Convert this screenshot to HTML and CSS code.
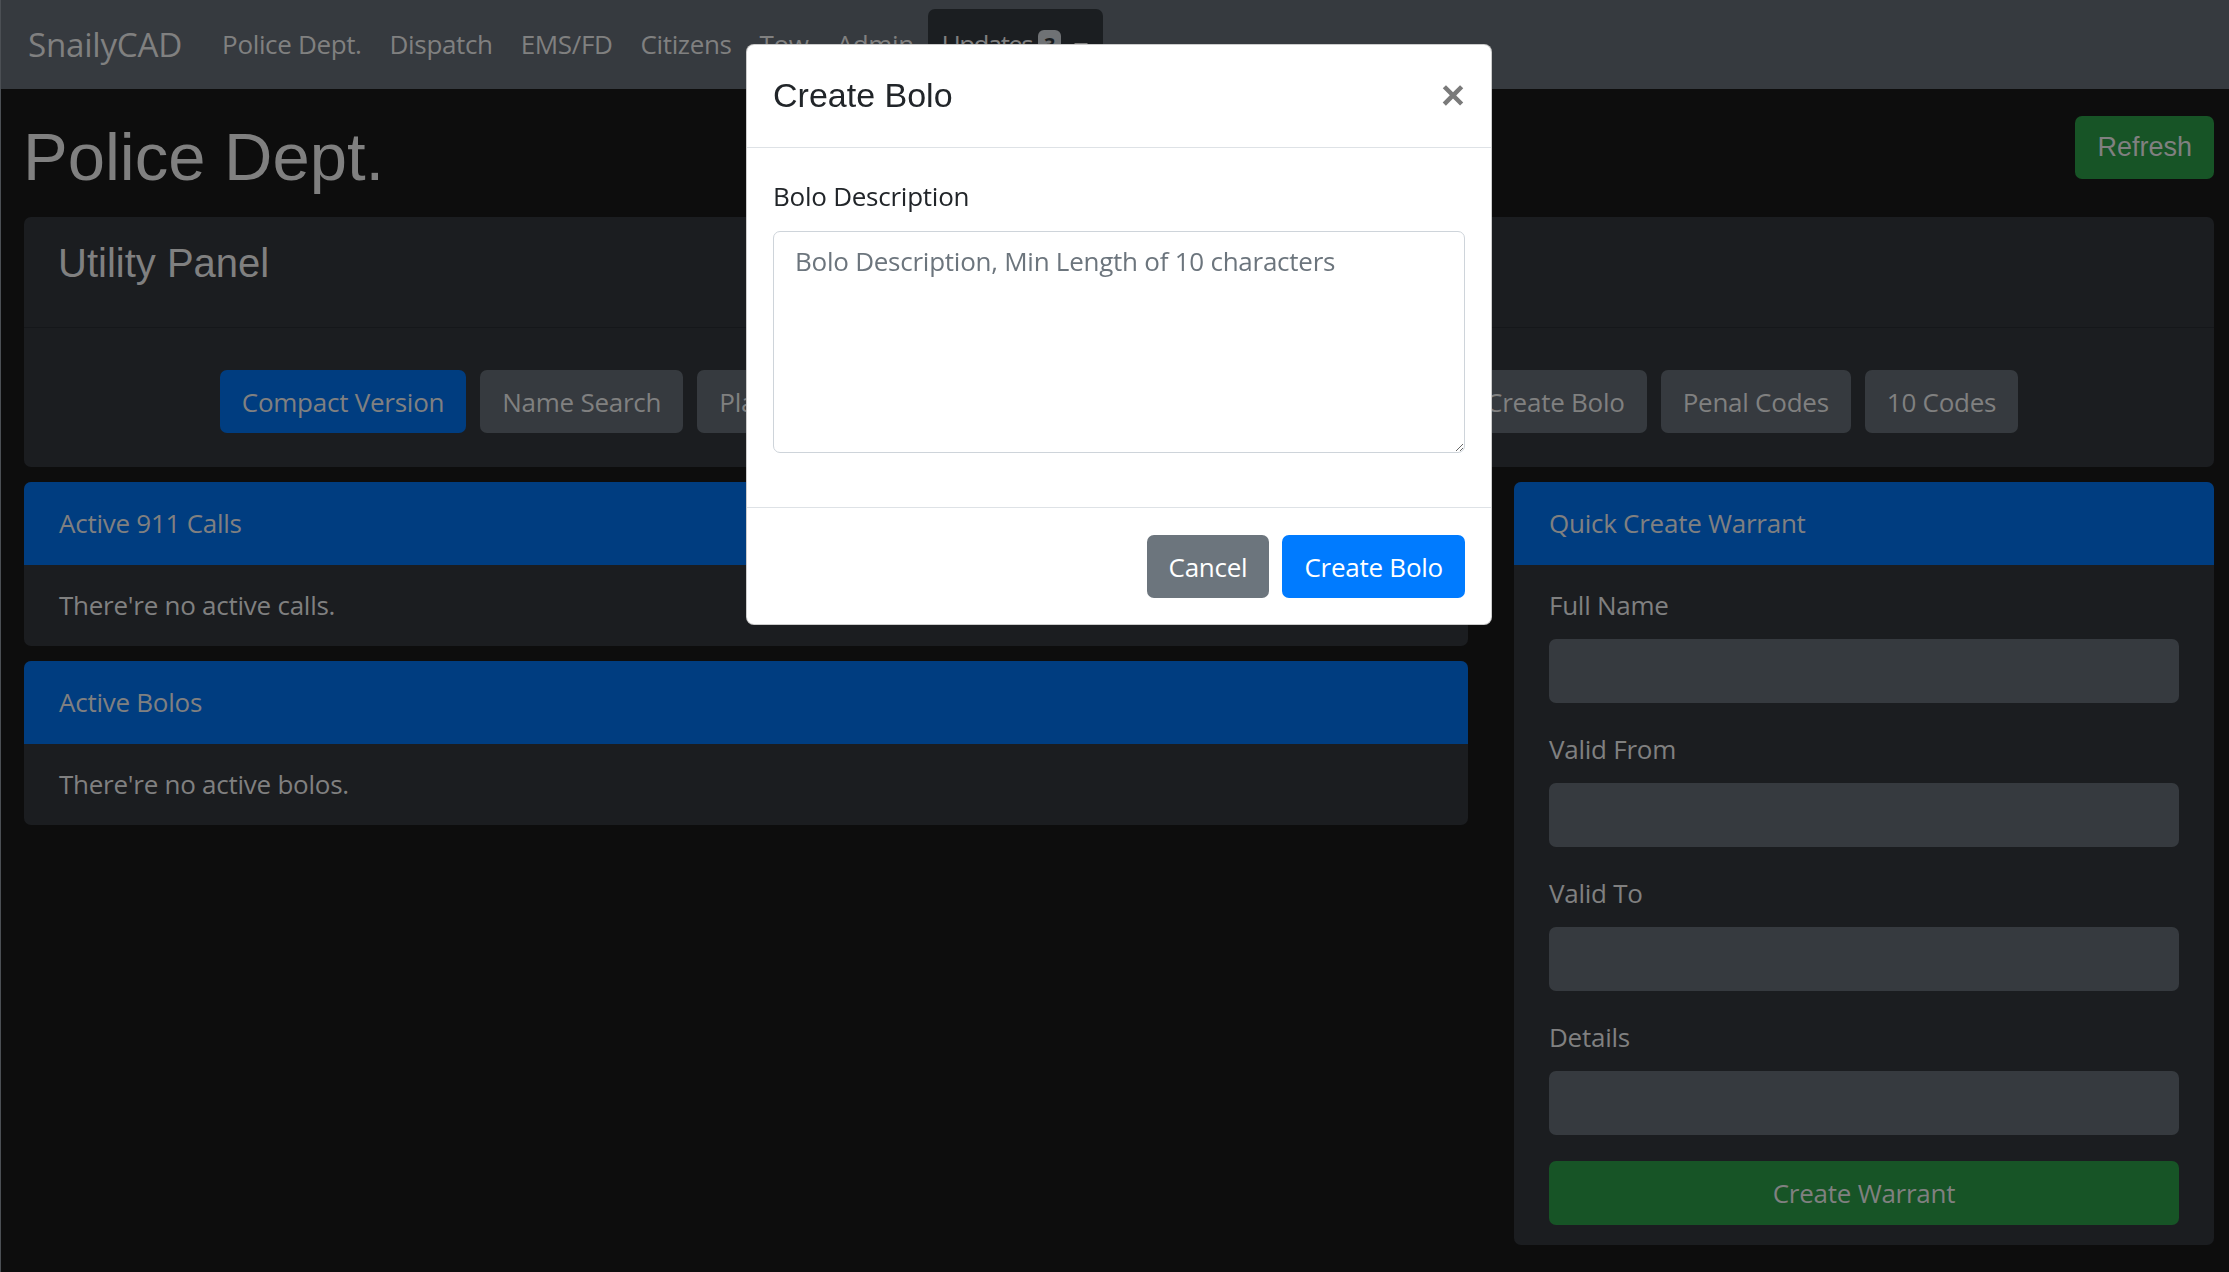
FILE: index.html
```html
<!DOCTYPE html>
<html lang="en">
<head>
<meta charset="utf-8">
<title>SnailyCAD - Police Dept.</title>
<link rel="stylesheet" href="styles.css">
</head>
<body>
<nav class="navbar">
  <span class="brand">SnailyCAD</span>
  <a class="nav-link">Police Dept.</a>
  <a class="nav-link">Dispatch</a>
  <a class="nav-link">EMS/FD</a>
  <a class="nav-link">Citizens</a>
  <a class="nav-link">Tow</a>
  <a class="nav-link">Admin</a>
  <a class="nav-link nav-open"><span class="updates-text">Updates</span><span class="badge">3</span><span class="caret"></span></a>
</nav>

<main class="container">
  <div class="page-head">
    <h1 class="page-title">Police Dept.</h1>
    <button class="btn btn-green btn-refresh">Refresh</button>
  </div>

  <section class="card utility">
    <div class="utility-header"><h4 class="utility-title">Utility Panel</h4></div>
    <div class="utility-body">
      <button class="btn btn-blue">Compact Version</button>
      <button class="btn btn-dark">Name Search</button>
      <button class="btn btn-dark">Plate Search</button>
      <button class="btn btn-dark">Weapon Search</button>
      <button class="btn btn-dark btn-narrow">Create Written Warning</button>
      <button class="btn btn-dark">Create Bolo</button>
      <button class="btn btn-dark">Penal Codes</button>
      <button class="btn btn-dark">10 Codes</button>
    </div>
  </section>

  <div class="columns">
    <div class="col-left">
      <section class="card">
        <div class="card-header">Active 911 Calls</div>
        <div class="card-body">There're no active calls.</div>
      </section>
      <section class="card">
        <div class="card-header">Active Bolos</div>
        <div class="card-body">There're no active bolos.</div>
      </section>
    </div>
    <div class="col-right">
      <section class="card">
        <div class="card-header">Quick Create Warrant</div>
        <div class="card-body">
          <div class="form-group">
            <label class="field-label">Full Name</label>
            <input class="field-input" type="text">
          </div>
          <div class="form-group">
            <label class="field-label">Valid From</label>
            <input class="field-input" type="text">
          </div>
          <div class="form-group">
            <label class="field-label">Valid To</label>
            <input class="field-input" type="text">
          </div>
          <div class="form-group">
            <label class="field-label">Details</label>
            <input class="field-input" type="text">
          </div>
          <button class="btn btn-green btn-block">Create Warrant</button>
        </div>
      </section>
    </div>
  </div>
</main>

<div class="modal">
  <div class="modal-header">
    <h5 class="modal-title">Create Bolo</h5>
    <span class="close">&times;</span>
  </div>
  <div class="modal-body">
    <label class="modal-label">Bolo Description</label>
    <textarea class="modal-textarea" placeholder="Bolo Description, Min Length of 10 characters"></textarea>
  </div>
  <div class="modal-footer">
    <button class="btn btn-secondary">Cancel</button>
    <button class="btn btn-primary">Create Bolo</button>
  </div>
</div>
</body>
</html>
```

FILE: styles.css
```css
html, body {
  margin: 0;
  padding: 0;
}

body {
  width: 2229px;
  height: 1272px;
  overflow: hidden;
  box-sizing: border-box;
  border-left: 1px solid #4b4f54;
  background: #0d0d0d;
  color: #808080;
  font-family: "Open Sans", "Noto Sans", sans-serif;
  font-size: 26px;
  line-height: 41px;
  letter-spacing: -0.25px;
}

/* NAVBAR */
.navbar {
  height: 89px;
  background: #363a3f;
  display: flex;
  align-items: center;
  padding-left: 27px;
}

.brand {
  font-size: 33.2px;
  line-height: 48px;
  margin-right: 26px;
  color: #808080;
}

.nav-link {
  padding: 0 14px;
  color: #808080;
  display: flex;
  align-items: center;
  letter-spacing: -0.35px;
}

.nav-open {
  background: #1b1e21;
  height: 71px;
  border-radius: 7px;
  padding: 0 15px 0 14px;
  align-self: flex-start;
  margin-top: 9px;
}

.updates-text {
  letter-spacing: -1.6px;
}

.badge {
  display: inline-block;
  width: 23px;
  height: 30px;
  margin-left: 6px;
  border-radius: 6px;
  background: #6f7275;
  color: #1b1e21;
  font-size: 20px;
  font-weight: 700;
  line-height: 30px;
  text-align: center;
  letter-spacing: 0;
}

.caret {
  display: inline-block;
  margin-left: 13px;
  margin-top: 4px;
  width: 0;
  height: 0;
  border-left: 7px solid transparent;
  border-right: 7px solid transparent;
  border-top: 7px solid #808080;
}

/* PAGE */
.container {
  padding: 0 15px 0 23px;
}

.page-head {
  display: flex;
  justify-content: space-between;
  align-items: flex-start;
  margin-top: 27px;
  margin-bottom: 20px;
}

.page-title {
  margin: 1px 0 0 -1px;
  font-family: "Liberation Sans", Arial, sans-serif;
  font-weight: normal;
  font-size: 67px;
  line-height: 80px;
  letter-spacing: 0;
  color: #808080;
}

.btn {
  height: 63px;
  padding: 0 22px;
  border: none;
  border-radius: 7px;
  font-family: "Open Sans", "Noto Sans", sans-serif;
  font-size: 26px;
  letter-spacing: -0.25px;
  color: #808080;
  cursor: pointer;
  white-space: nowrap;
}

.btn-narrow {
  padding: 0 12px;
}

.btn-refresh {
  font-family: "Liberation Sans", Arial, sans-serif;
  font-size: 27px;
  letter-spacing: 0;
  padding: 0 22px;
}

.btn-green { background: #175426; }
.btn-blue { background: #003d80; }
.btn-dark { background: #363a3f; }

.card {
  background: #1b1d20;
  border-radius: 7px;
  overflow: hidden;
  margin-bottom: 15px;
}

.utility-header {
  padding: 22px 34px 40px;
  border-bottom: 1px solid #15171a;
}

.utility-title {
  margin: 0;
  font-family: "Liberation Sans", Arial, sans-serif;
  font-weight: normal;
  font-size: 40px;
  line-height: 48px;
  letter-spacing: 0;
  color: #808080;
}

.utility-body {
  padding: 42px 20px 34px;
  display: flex;
  flex-wrap: wrap;
  justify-content: center;
  gap: 14px;
}

.columns {
  display: grid;
  grid-template-columns: 1fr 700px;
  column-gap: 46px;
}

.card-header {
  background: #003d80;
  padding: 21px 35px;
}

.card-body {
  padding: 20px 35px;
}

.form-group {
  margin-bottom: 26px;
}

.field-label {
  display: block;
  line-height: 40px;
  margin-bottom: 14px;
}

.field-input {
  display: block;
  width: 100%;
  height: 64px;
  box-sizing: border-box;
  border: none;
  border-radius: 7px;
  background: #363a3f;
  margin: 0;
}

.btn-block {
  display: block;
  width: 100%;
  height: 64px;
}

/* MODAL */
.modal {
  position: fixed;
  left: 746px;
  top: 44px;
  width: 746px;
  box-sizing: border-box;
  background: #fff;
  border: 1px solid rgba(0, 0, 0, 0.2);
  border-radius: 8px;
  color: #212529;
}

.modal-header {
  display: flex;
  justify-content: space-between;
  align-items: center;
  padding: 25px 26px 26px;
  border-bottom: 1px solid #dee2e6;
}

.modal-title {
  margin: 0;
  font-family: "Liberation Sans", Arial, sans-serif;
  font-weight: normal;
  font-size: 34px;
  line-height: 51px;
  letter-spacing: 0;
  color: #212529;
}

.close {
  font-family: "Liberation Sans", Arial, sans-serif;
  font-weight: 700;
  font-size: 41px;
  line-height: 51px;
  letter-spacing: 0;
  color: #7a7a7a;
}

.modal-body {
  padding: 28px 26px 27px;
}

.modal-label {
  display: block;
  color: #212529;
  line-height: 41px;
  margin-bottom: 14px;
}

.modal-textarea {
  display: block;
  width: 100%;
  height: 222px;
  box-sizing: border-box;
  margin: 0 0 27px;
  padding: 9px 21px 9px;
  border: 1px solid #ced4da;
  border-radius: 7px;
  font-family: "Open Sans", "Noto Sans", sans-serif;
  font-size: 26px;
  line-height: 41px;
  letter-spacing: -0.25px;
  color: #495057;
  resize: vertical;
}

.modal-textarea::placeholder {
  color: #6c757d;
  opacity: 1;
}

.modal-footer {
  display: flex;
  justify-content: flex-end;
  gap: 13px;
  padding: 27px 26px 26px;
  border-top: 1px solid #dee2e6;
}

.btn-secondary {
  background: #6c757d;
  color: #fff;
  padding: 0 22px;
}

.btn-primary {
  background: #007bff;
  color: #fff;
  padding: 0 22px;
}
```
